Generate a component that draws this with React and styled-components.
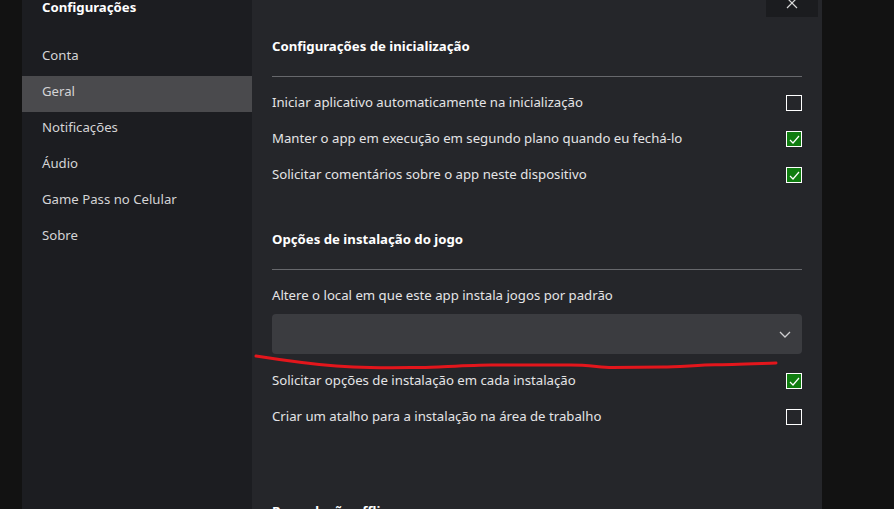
import React from "react";
import styled, { createGlobalStyle } from "styled-components";

const GlobalStyle = createGlobalStyle`
  html, body {
    margin: 0;
    padding: 0;
    background: #121212;
    overflow: hidden;
  }
  body {
    font-family: "Noto Sans", "Liberation Sans", sans-serif;
  }
`;

const Page = styled.div`
  display: flex;
  width: 894px;
  height: 509px;
  overflow: hidden;
  background: #121212;
  padding-left: 22px;
  box-sizing: border-box;
`;

const Sidebar = styled.nav`
  width: 230px;
  flex: none;
  background: #1c1d21;
  display: flex;
  flex-direction: column;
  & > * {
    flex-shrink: 0;
  }
`;

const SideTitle = styled.div`
  height: 43px;
  padding-left: 20px;
  margin-top: -3px;
  font-size: 13.2px;
  line-height: 20px;
  font-weight: 700;
  color: #ffffff;
`;

const NavItem = styled.div`
  height: 36px;
  display: flex;
  align-items: center;
  padding: 0 20px 6px;
  box-sizing: border-box;
  font-size: 13.2px;
  color: #d4d4d6;
  background: ${({ $active }) => ($active ? "#4a4a4d" : "transparent")};
`;

const Panel = styled.main`
  width: 570px;
  flex: none;
  background: #25262a;
  display: flex;
  flex-direction: column;
  padding: 0 20px;
  box-sizing: border-box;
  position: relative;
  & > * {
    flex-shrink: 0;
  }
`;

const TopBar = styled.div`
  height: 36px;
  display: flex;
  justify-content: flex-end;
  margin-right: -16px;
`;

const CloseButton = styled.div`
  width: 52px;
  height: 17px;
  background: #1b1c1f;
  display: flex;
  justify-content: center;
  overflow: hidden;
  svg {
    margin-top: -3px;
  }
`;

const Heading = styled.div`
  font-size: 13.2px;
  line-height: 20px;
  font-weight: 700;
  color: #ffffff;
  margin-top: ${({ $top }) => $top}px;
`;

const Divider = styled.div`
  height: 1px;
  background: #67686c;
  margin: 20px 0 ${({ $after }) => $after}px;
`;

const Row = styled.div`
  height: 36px;
  display: flex;
  align-items: center;
  justify-content: space-between;
  font-size: 13.2px;
  color: #e4e4e6;
`;

const Label = styled.span`
  margin-top: -2px;
`;

const Box = styled.span`
  width: 16px;
  height: 16px;
  box-sizing: border-box;
  border: 1.5px solid #ffffff;
  background: ${({ $checked }) => ($checked ? "#107c10" : "transparent")};
  display: flex;
  align-items: center;
  justify-content: center;
`;

const FieldLabel = styled.div`
  font-size: 13.2px;
  line-height: 20px;
  color: #e4e4e6;
`;

const Dropdown = styled.div`
  height: 40px;
  margin: 9px 0 9px;
  border-radius: 4px;
  background: #3b3c40;
  display: flex;
  align-items: center;
  justify-content: flex-end;
  padding-right: 11px;
`;

const Scribble = styled.svg`
  position: absolute;
  left: 0;
  top: 0;
  pointer-events: none;
`;

const Check = ({ checked }) => (
  <Box $checked={checked}>
    {checked && (
      <svg width="11" height="9" viewBox="0 0 11 9">
        <path d="M1 5 L4 8 L10 1" fill="none" stroke="#fff" strokeWidth="1.2" />
      </svg>
    )}
  </Box>
);

const SettingRow = ({ text, checked }) => (
  <Row>
    <Label>{text}</Label>
    <Check checked={checked} />
  </Row>
);

const navItems = [
  "Conta",
  "Geral",
  "Notificações",
  "Áudio",
  "Game Pass no Celular",
  "Sobre",
];

export default function App() {
  return (
    <>
      <GlobalStyle />
      <Page>
        <Sidebar>
          <SideTitle>Configurações</SideTitle>
          {navItems.map((item) => (
            <NavItem key={item} $active={item === "Geral"}>
              {item}
            </NavItem>
          ))}
        </Sidebar>
        <Panel>
          <TopBar>
            <CloseButton>
              <svg width="12" height="12" viewBox="0 0 12 12">
                <path d="M1 1 L11 11 M11 1 L1 11" stroke="#d8d8d8" strokeWidth="1.2" />
              </svg>
            </CloseButton>
          </TopBar>
          <Heading $top={0}>Configurações de inicialização</Heading>
          <Divider $after={8} />
          <SettingRow text="Iniciar aplicativo automaticamente na inicialização" checked={false} />
          <SettingRow text="Manter o app em execução em segundo plano quando eu fechá-lo" checked />
          <SettingRow text="Solicitar comentários sobre o app neste dispositivo" checked />
          <Heading $top={36}>Opções de instalação do jogo</Heading>
          <Divider $after={15} />
          <FieldLabel>Altere o local em que este app instala jogos por padrão</FieldLabel>
          <Dropdown>
            <svg width="12" height="7" viewBox="0 0 12 7">
              <path d="M1 1 L6 6 L11 1" fill="none" stroke="#cfcfd1" strokeWidth="1.3" />
            </svg>
          </Dropdown>
          <SettingRow text="Solicitar opções de instalação em cada instalação" checked />
          <SettingRow text="Criar um atalho para a instalação na área de trabalho" checked={false} />
          <Heading $top={66}>Reprodução offline</Heading>
          <Scribble width="570" height="509" viewBox="252 0 570 509">
            <path
              d="M256 356 C 275 359, 290 361, 302 362.5 S 345 367, 370 367.5 S 410 367.5, 422 367.5 S 470 365, 491 365 S 550 365, 570 365 S 600 367.5, 612 367.5 S 650 367, 663 367 S 700 365, 715 364.8 S 760 363.5, 776 363"
              fill="none"
              stroke="#e3161c"
              strokeWidth="3"
              strokeLinecap="round"
            />
          </Scribble>
        </Panel>
      </Page>
    </>
  );
}
